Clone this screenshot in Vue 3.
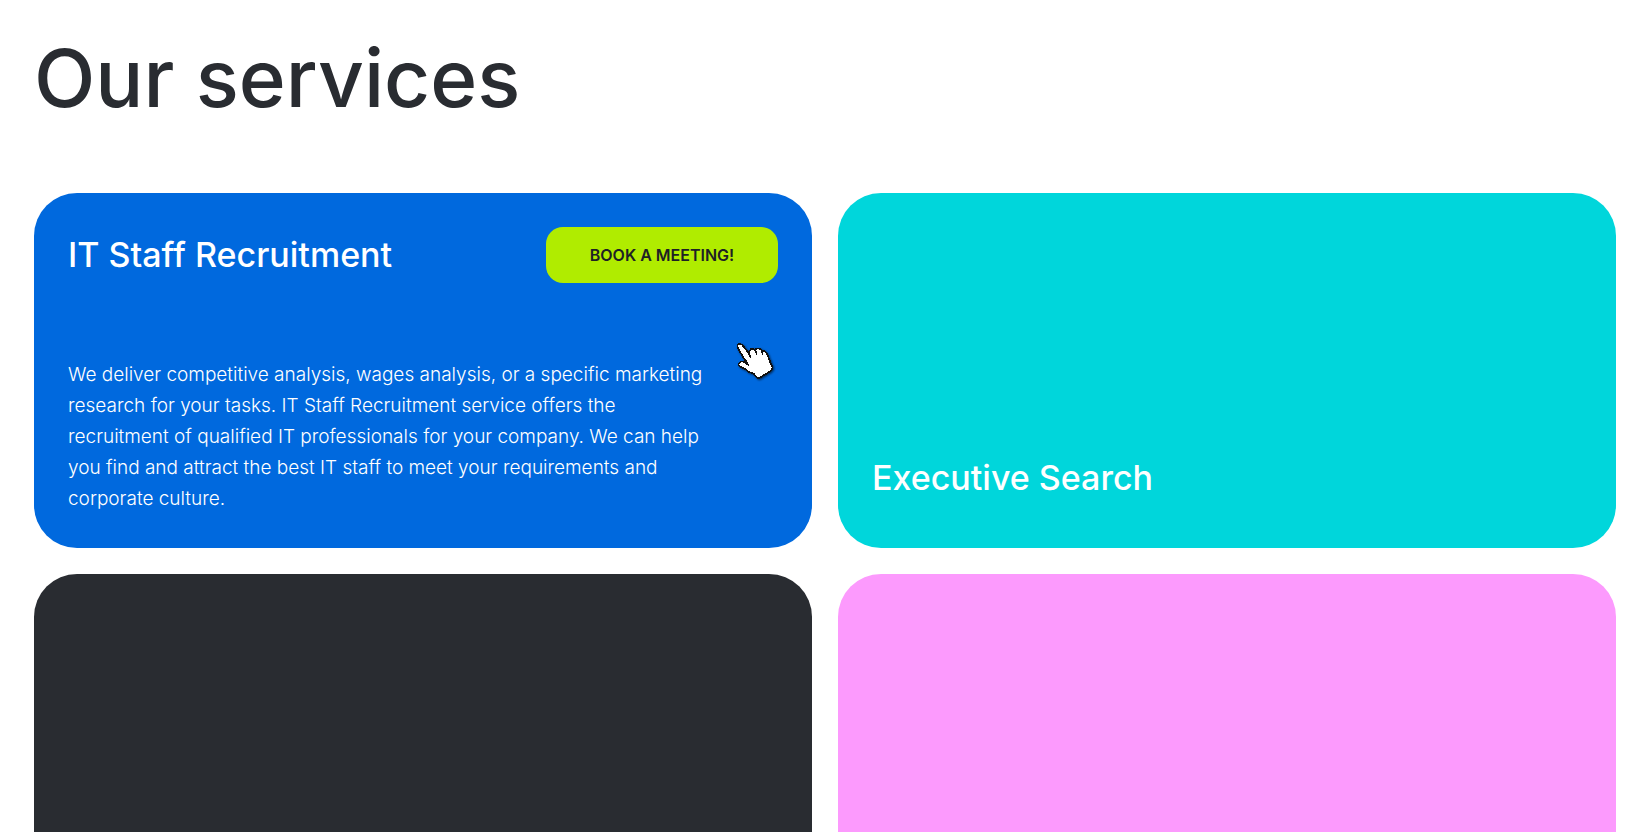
<script setup>
const title = 'Our services'
</script>

<template>
  <main class="page">
    <h1 class="title">{{ title }}</h1>
    <section class="grid" :aria-label="title">
      <article class="card card-blue">
        <header class="card-head">
          <h2 class="card-title">IT Staff Recruitment</h2>
          <button type="button" class="book">BOOK A MEETING!</button>
        </header>
        <p class="text">
          We deliver competitive analysis, wages analysis, or a specific marketing
          research for your tasks. IT Staff Recruitment service offers the
          recruitment of qualified IT professionals for your company. We can help
          you find and attract the best IT staff to meet your requirements and
          corporate culture.
        </p>
        <svg class="cursor" viewBox="32 34 120 120" shape-rendering="crispEdges" aria-hidden="true">
          <path
            class="hand"
            d="M37 42 L42 39 L50 42 L56 49 L60 54 L64 60 L69 65 L71 68 L73 60 L77 55 L84 55 L90 60 L92 55 L99 53 L107 56 L110 60 L118 62 L123 67 L127 73 L130 82 L133 88 L135 96 L140 104 L142 111 L137 120 L128 126 L120 131 L111 136 L104 141 L97 142 L90 136 L85 129 L77 126 L69 123 L62 117 L55 113 L47 109 L40 104 L40 99 L46 93 L55 93 L60 96 L64 95 L61 90 L55 82 L50 73 L45 65 L40 56 L36 49 Z"
          />
          <path class="fold" d="M70 67 L77 81 M89 58 L95 72 M108 60 L113 72 M61 97 L71 104" />
        </svg>
      </article>
      <article class="card card-cyan">
        <h2 class="card-title">Executive Search</h2>
      </article>
      <article class="card card-dark"></article>
      <article class="card card-pink"></article>
    </section>
  </main>
</template>

<style>
body {
  margin: 0;
  background: #fff;
}
</style>

<style scoped>
.page {
  box-sizing: border-box;
  height: 100vh;
  overflow: hidden;
  padding: 26px 34px 0;
  font-family: Inter, "Liberation Sans", sans-serif;
  color: #292c31;
}
.title {
  margin: 0 0 63px;
  font-size: 80px;
  line-height: 104px;
  font-weight: 500;
}
.grid {
  display: grid;
  grid-template-columns: 1fr 1fr;
  grid-auto-rows: minmax(355px, auto);
  gap: 26px;
}
.card {
  position: relative;
  box-sizing: border-box;
  display: flex;
  flex-direction: column;
  padding: 34px;
  border-radius: 43px;
  color: #fff;
}
.card-blue {
  background: #0069de;
  justify-content: space-between;
}
.card-cyan {
  background: #00d6db;
  justify-content: flex-end;
}
.card-dark {
  background: #292c31;
}
.card-pink {
  background: #fc9afd;
}
.card-head {
  display: flex;
  justify-content: space-between;
  align-items: center;
}
.card-title {
  margin: 0;
  font-size: 34px;
  line-height: 56px;
  font-weight: 500;
}
.card-cyan .card-title {
  padding-bottom: 8px;
}
.book {
  width: 232px;
  height: 56px;
  padding: 0;
  border: 0;
  border-radius: 17px;
  background: #b0ec00;
  color: #1e2125;
  font-family: inherit;
  font-size: 16px;
  font-weight: 600;
  cursor: pointer;
}
.text {
  margin: 0;
  max-width: 642px;
  font-size: 19px;
  line-height: 31px;
  font-weight: 300;
}
.cursor {
  position: absolute;
  top: 149px;
  right: 36px;
  width: 40px;
  height: 40px;
  filter: drop-shadow(1px 1px 1px rgba(0, 0, 0, 0.6));
}
.hand {
  fill: #fff;
  stroke: #111;
  stroke-width: 5;
}
.fold {
  fill: none;
  stroke: #111;
  stroke-width: 5;
}
</style>
